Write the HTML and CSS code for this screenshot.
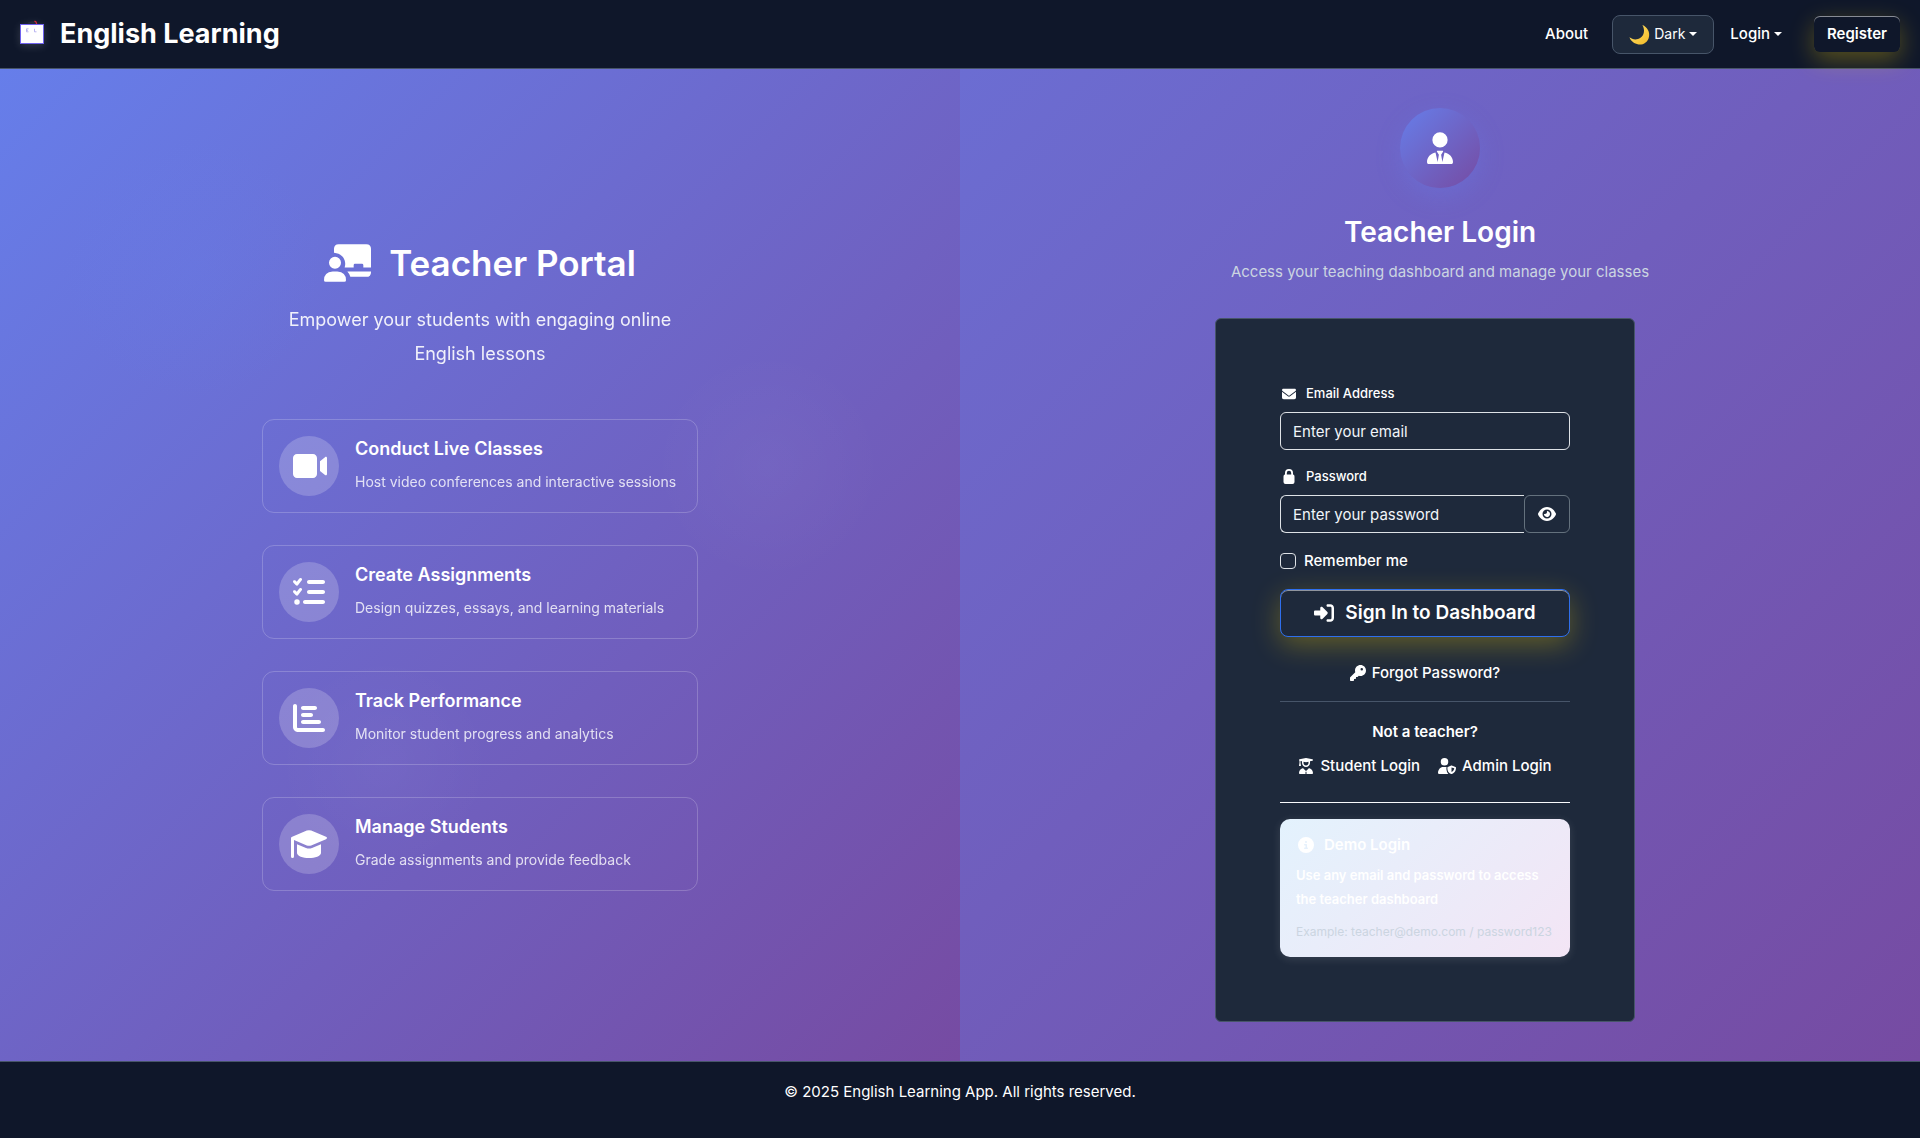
FILE: index.html
```html
<!DOCTYPE html>
<html lang="en">
<head>
<meta charset="utf-8">
<title>Teacher Login - English Learning</title>
<link rel="stylesheet" href="styles.css">
</head>
<body>
<header class="navbar">
  <a class="brand" href="#">
    <svg class="brand-logo" viewBox="0 0 40 32" aria-hidden="true">
      <path d="M16 4.500q4-2 8-1v2h-8z" fill="#252b3c"/>
      <path d="M22.500 3l1.500 1 .8 2.500" fill="none" stroke="#d92b3a" stroke-width="1.200"/>
      <rect x="8.500" y="6.500" width="23" height="19" fill="#fff" stroke="#6f62ee" stroke-width="1"/>
      <path d="M16.500 10.800h-2v3h2m-2-1.500h1.500M22.500 10.800v3h2" stroke="#a9a3ee" stroke-width=".8" fill="none"/>
    </svg>
    <span>English Learning</span>
  </a>
  <nav class="nav-links">
    <a class="nav-link" href="#">About</a>
    <button class="theme-toggle" type="button">
      <svg class="moon" viewBox="0 0 22 22" aria-hidden="true">
        <defs><linearGradient id="moonFill" x1="0" y1="0" x2="1" y2="1"><stop offset="0" stop-color="#ffe36b"/><stop offset="1" stop-color="#f3b928"/></linearGradient></defs>
        <path d="M14 1c5 2 8 7 7 12-1 6-6 9-11 8.500C5.500 21 2 18 .5 14c3 2.500 8 3 11.500.5C16 12 17 6 14 1z" fill="url(#moonFill)"/>
      </svg>
      <span>Dark</span><span class="caret"></span>
    </button>
    <a class="nav-link" href="#">Login<span class="caret"></span></a>
    <a class="register" href="#">Register</a>
  </nav>
</header>

<main class="split">
  <section class="promo">
    <div class="promo-content">
      <h1 class="promo-title">
        <svg class="promo-icon" viewBox="0 0 141 113" aria-hidden="true"><path d="M30 26V14Q30 0 44 0H127Q141 0 141 14V70H118V63Q118 59 114 59H93Q89 59 89 63V70H62C68 50 58 29 30 26zM70 82H141V84Q141 98 127 98H79Q76 88 70 82zM33 38a18 18 0 1 1 0 36 18 18 0 1 1 0-36zM26 82H40Q66 84 66 108 66 113 61 113H5Q0 113 0 108 0 84 26 82z"/></svg>
        <span>Teacher Portal</span>
      </h1>
      <p class="promo-lead">Empower your students with engaging online English lessons</p>
      <ul class="features">
        <li class="feature">
          <span class="feature-icon"><svg viewBox="0 0 576 512" width="36" height="32" aria-hidden="true"><path d="M32 128C32 92.700 60.700 64 96 64H352c35.300 0 64 28.700 64 64V384c0 35.300-28.700 64-64 64H96c-35.300 0-64-28.700-64-64V128zM464 178L544 114c14-10 32-4 32 16V382c0 20-18 26-32 16L464 334z"/></svg></span>
          <div><h2>Conduct Live Classes</h2><p>Host video conferences and interactive sessions</p></div>
        </li>
        <li class="feature">
          <span class="feature-icon"><svg viewBox="0 0 512 512" width="32" height="32" aria-hidden="true"><path d="M134 36c12 8 14 22 6 33l-58 76c-5 6-11 9-18 9s-13-3-17-8L7 106C-2 96-2 82 7 73s24-9 33 0l20 20 41-52c8-11 22-13 33-5zm0 160c12 8 14 22 6 33l-58 76c-5 6-11 9-18 9s-13-3-17-8L7 266c-9-10-9-24 0-33s24-9 33 0l20 20 41-52c8-11 22-13 33-5zM224 96c0-17.700 14.300-32 32-32H480c17.700 0 32 14.300 32 32s-14.300 32-32 32H256c-17.700 0-32-14.300-32-32zm0 160c0-17.700 14.300-32 32-32H480c17.700 0 32 14.300 32 32s-14.300 32-32 32H256c-17.700 0-32-14.300-32-32zM160 416c0-17.700 14.300-32 32-32H480c17.700 0 32 14.300 32 32s-14.300 32-32 32H192c-17.700 0-32-14.300-32-32zM64 372a44 44 0 1 1 0 88 44 44 0 1 1 0-88z"/></svg></span>
          <div><h2>Create Assignments</h2><p>Design quizzes, essays, and learning materials</p></div>
        </li>
        <li class="feature">
          <span class="feature-icon"><svg viewBox="0 0 512 512" width="32" height="32" aria-hidden="true"><path d="M32 32c17.700 0 32 14.300 32 32V400c0 8.800 7.200 16 16 16H480c17.700 0 32 14.300 32 32s-14.300 32-32 32H80c-44.200 0-80-35.800-80-80V64C0 46.300 14.300 32 32 32zm96 64c0-17.700 14.300-32 32-32H352c17.700 0 32 14.300 32 32s-14.300 32-32 32H160c-17.700 0-32-14.300-32-32zm32 80H288c17.700 0 32 14.300 32 32s-14.300 32-32 32H160c-17.700 0-32-14.300-32-32s14.300-32 32-32zm0 112H416c17.700 0 32 14.300 32 32s-14.300 32-32 32H160c-17.700 0-32-14.300-32-32s14.300-32 32-32z"/></svg></span>
          <div><h2>Track Performance</h2><p>Monitor student progress and analytics</p></div>
        </li>
        <li class="feature">
          <span class="feature-icon"><svg viewBox="0 0 36 28" width="36" height="28" aria-hidden="true"><path d="M15.800.6Q18-.3 20.200.6L35 6.800Q37 8 35 9.200L20.200 15.400Q18 16.300 15.800 15.400L3 10.100V26.500a1.500 1.500 0 0 1-3 0V8Q0 7 1.200 6.700zM6 14.200L15 17.900Q18 19 21 17.900L30 14.200V23C30 26 24 28 18 28S6 26 6 23z"/></svg></span>
          <div><h2>Manage Students</h2><p>Grade assignments and provide feedback</p></div>
        </li>
      </ul>
    </div>
  </section>

  <section class="login">
    <div class="login-head">
      <span class="avatar"><svg viewBox="0 0 448 512" width="28" height="32" aria-hidden="true"><path d="M224 248A122 122 0 1 1 224 4a122 122 0 1 1 0 244zM206 362l-30-48c-5-8 0-14 8-14h80c8 0 13 6 8 14l-30 48 20 116 34-152c80 14 136 76 136 152 0 20-10 34-28 34H44c-18 0-28-14-28-34 0-76 56-138 136-152l34 152z"/></svg></span>
      <h2>Teacher Login</h2>
      <p>Access your teaching dashboard and manage your classes</p>
    </div>
    <div class="card">
      <form class="form">
        <div class="field">
          <label for="email"><svg viewBox="0 0 512 512" width="14" height="14" aria-hidden="true"><path d="M48 64C21.500 64 0 85.500 0 112c0 15.100 7.100 29.300 19.200 38.400L236.800 313.600c11.400 8.500 27 8.500 38.400 0L492.800 150.400c12.100-9.100 19.200-23.300 19.200-38.400 0-26.500-21.500-48-48-48H48zM0 176V384c0 35.300 28.700 64 64 64H448c35.300 0 64-28.700 64-64V176L294.400 339.200c-22.800 17.100-54 17.100-76.800 0L0 176z"/></svg>Email Address</label>
          <input class="control" id="email" type="email" placeholder="Enter your email">
        </div>
        <div class="field">
          <label for="password"><svg viewBox="0 0 11 15" width="14" height="15" aria-hidden="true"><path fill-rule="evenodd" d="M1.500 5.500V4a4 4 0 0 1 8 0v1.500Q11 5.700 11 7.500V13q0 2-2 2H2q-2 0-2-2V7.500Q0 5.700 1.500 5.500zM3.300 5.500h4.400V4a2.200 2.200 0 0 0-4.400 0z"/></svg>Password</label>
          <div class="input-group">
            <input class="control" id="password" type="password" placeholder="Enter your password">
            <button class="reveal" type="button" aria-label="Show password"><svg viewBox="0 0 576 512" width="18" height="16" aria-hidden="true"><path d="M288 32c-80.800 0-145.500 36.800-192.600 80.600C48.600 156 17.300 208 2.500 243.700c-3.300 7.900-3.300 16.700 0 24.600C17.300 304 48.600 356 95.400 399.400C142.500 443.200 207.200 480 288 480s145.500-36.800 192.600-80.600c46.800-43.500 78.100-95.400 93-131.100c3.300-7.900 3.300-16.700 0-24.600c-14.900-35.700-46.200-87.700-93-131.100C433.500 68.800 368.800 32 288 32zM144 256a144 144 0 1 1 288 0 144 144 0 1 1-288 0zm144-64c0 35.300-28.700 64-64 64c-7.100 0-13.900-1.200-20.300-3.300c-5.500-1.800-11.900 1.600-11.700 7.400c.3 6.900 1.300 13.800 3.200 20.700c13.700 51.200 66.400 81.600 117.600 67.900s81.600-66.400 67.900-117.600c-11.100-41.500-47.800-69.400-88.600-71.100c-5.800-.2-9.200 6.100-7.400 11.700c2.100 6.400 3.300 13.200 3.300 20.300z"/></svg></button>
          </div>
        </div>
        <label class="check"><input type="checkbox">Remember me</label>
        <button class="submit" type="submit"><svg viewBox="0 0 512 512" width="20" height="20" aria-hidden="true"><path d="M352 96h64c17.700 0 32 14.300 32 32V384c0 17.700-14.300 32-32 32H352c-17.700 0-32 14.300-32 32s14.300 32 32 32h64c53 0 96-43 96-96V128c0-53-43-96-96-96H352c-17.700 0-32 14.300-32 32s14.300 32 32 32zm-9.400 182.600c12.500-12.500 12.500-32.800 0-45.300l-128-128c-9.200-9.200-22.900-11.900-34.900-6.900S160 115.100 160 128v64H32c-17.700 0-32 14.300-32 32v64c0 17.700 14.300 32 32 32H160v64c0 12.900 7.800 24.600 19.800 29.600s25.700 2.200 34.900-6.900l128-128z"/></svg>Sign In to Dashboard</button>
      </form>
      <a class="forgot icon-link" href="#"><svg viewBox="0 0 512 512" width="16" height="16" aria-hidden="true"><path d="M336 352c97.200 0 176-78.800 176-176S433.200 0 336 0S160 78.800 160 176c0 18.700 2.900 36.800 8.300 53.700L7 391c-4.500 4.500-7 10.600-7 17v80c0 13.300 10.700 24 24 24h80c13.300 0 24-10.700 24-24V448h40c13.300 0 24-10.700 24-24V384h40c6.400 0 12.500-2.500 17-7l33.300-33.300c16.900 5.400 35 8.300 53.700 8.300zM376 96a40 40 0 1 1 0 80 40 40 0 1 1 0-80z"/></svg>Forgot Password?</a>
      <div class="others">
        <p>Not a teacher?</p>
        <div class="other-links">
          <a class="icon-link" href="#"><svg viewBox="0 0 448 512" width="16" height="16" aria-hidden="true"><path d="M219.300.5c3.100-.6 6.300-.6 9.400 0l200 40C439.900 42.700 448 52.600 448 64s-8.100 21.300-19.300 23.500L352 102.900V160c0 70.700-57.300 128-128 128S96 230.700 96 160V102.900L48 93.300v65.100l15.700 78.400c.9 4.700-.3 9.600-3.300 13.300S52.800 256 48 256H16c-4.800 0-9.300-2.100-12.400-5.900s-4.300-8.600-3.300-13.300L16 158.400V86.600C6.500 83.300 0 74.300 0 64 0 52.600 8.100 42.700 19.300 40.500l200-40zM111.900 327.700c10.500-3.400 21.800.4 29.400 8.500l71 75.500c6.300 6.700 17 6.700 23.300 0l71-75.500c7.600-8.100 18.900-11.900 29.400-8.500C401 348.600 448 409.400 448 481.300c0 17-13.800 30.700-30.700 30.700H240V440h-32v72H30.700C13.800 512 0 498.200 0 481.300c0-71.900 47-132.700 111.900-153.600zM144 150v10c0 44 36 80 80 80s80-36 80-80v-38l-80 16-80-16z" fill-rule="evenodd"/></svg>Student Login</a>
          <a class="icon-link" href="#"><svg viewBox="0 0 576 512" width="18" height="16" aria-hidden="true"><path fill-rule="evenodd" d="M208 0a120 120 0 1 1 0 240 120 120 0 1 1 0-240zM163 288h90c8 0 16 1 24 2-6 8-9 18-9 30 0 72 20 142 62 192H30c-17 0-30-14-30-30 0-108 70-194 163-194zM423 242c5-2 11-2 17 0l120 45c9 4 16 12 16 23 0 60-24 162-136 201-6 2-12 2-17 0-112-39-123-141-123-201 0-11 6-19 15-23zm9 59v150c64-30 85-78 88-120z"/></svg>Admin Login</a>
        </div>
      </div>
      <aside class="demo">
        <h3><svg viewBox="0 0 512 512" width="16" height="16" aria-hidden="true"><path d="M256 512A256 256 0 1 0 256 0a256 256 0 1 0 0 512zM216 336h24V272H216c-13.300 0-24-10.700-24-24s10.700-24 24-24h48c13.300 0 24 10.700 24 24v88h8c13.300 0 24 10.700 24 24s-10.700 24-24 24H216c-13.300 0-24-10.700-24-24s10.700-24 24-24zm40-208a32 32 0 1 1 0 64 32 32 0 1 1 0-64z"/></svg>Demo Login</h3>
        <p>Use any email and password to access the teacher dashboard</p>
        <small>Example: teacher@demo.com / password123</small>
      </aside>
    </div>
  </section>
</main>

<footer class="footer">© 2025 English Learning App. All rights reserved.</footer>
</body>
</html>
```
FILE: styles.css
```css
*, *::before, *::after { box-sizing: border-box; }

body {
  margin: 0;
  min-height: 100vh;
  display: flex;
  flex-direction: column;
  background: #0f172a;
  color: #fff;
  font-family: Inter, "Liberation Sans", sans-serif;
  font-size: 15px;
  line-height: 24px;
}

h1, h2, h3, p, ul { margin: 0; padding: 0; }
a { color: inherit; text-decoration: none; }
svg { fill: currentColor; flex: none; }
button, input { font: inherit; color: inherit; }

.navbar {
  position: relative;
  z-index: 1;
  display: flex;
  align-items: center;
  justify-content: space-between;
  height: 69px;
  padding: 0 20px 0 12px;
  background: #0f172a;
  border-bottom: 1px solid #475569;
}
.brand { display: flex; align-items: center; gap: 8px; font-size: 27px; font-weight: 700; line-height: 40px; }
.brand-logo { width: 40px; height: 32px; filter: drop-shadow(0 2px 4px rgba(255, 255, 255, .15)); }
.nav-links { display: flex; align-items: center; gap: 8px; }
.nav-link { padding: 8px; font-weight: 500; }
.caret {
  display: inline-block;
  margin-left: 4px;
  vertical-align: 3px;
  border: 4px solid transparent;
  border-top-color: currentColor;
  border-bottom: 0;
}
.theme-toggle {
  display: flex;
  align-items: center;
  gap: 4px;
  height: 39px;
  margin-left: 8px;
  padding: 0 16px;
  background: #1e293b;
  border: 1px solid #475569;
  border-radius: 8px;
  font-size: 14px;
}
.theme-toggle .caret { margin-left: 0; }
.moon { width: 21px; height: 21px; }
.register {
  margin-left: 16px;
  padding: 6px 13px;
  background: #0f172a;
  border-radius: 6px;
  font-weight: 600;
  box-shadow: inset 0 1px 0 rgba(255, 255, 255, .5), 0 8px 24px rgba(255, 215, 0, .3);
}

.split {
  flex: 1;
  display: grid;
  grid-template-columns: 1fr 1fr;
  background: linear-gradient(135deg, #667eea 0%, #764ba2 100%);
}

.promo {
  display: flex;
  align-items: center;
  justify-content: center;
  padding: 48px;
  background:
    radial-gradient(circle at 20% 20%, rgba(102, 126, 234, .2), transparent 12%),
    radial-gradient(circle at 80% 40%, rgba(255, 255, 255, .03), transparent 12%),
    radial-gradient(circle at 40% 70%, rgba(255, 255, 255, .03), transparent 12%),
    linear-gradient(135deg, #667eea 0%, #764ba2 100%);
}
.promo-content { width: 436px; text-align: center; }
.promo-title {
  display: flex;
  align-items: center;
  justify-content: center;
  gap: 18px;
  font-size: 35px;
  font-weight: 600;
  line-height: 48px;
}
.promo-icon { width: 47px; height: 38px; }
.promo-lead { margin: 16px 0 48px; padding: 0 16px; font-size: 18px; line-height: 34px; opacity: .9; }
.features { display: grid; gap: 32px; list-style: none; text-align: left; }
.feature {
  display: flex;
  gap: 16px;
  padding: 16px;
  height: 94px;
  border: 1px solid rgba(255, 255, 255, .2);
  border-radius: 12px;
}
.feature-icon {
  display: grid;
  place-items: center;
  width: 60px;
  height: 60px;
  border-radius: 50%;
  background: rgba(255, 255, 255, .2);
}
.feature h2 { margin-bottom: 8px; font-size: 18px; font-weight: 600; line-height: 26px; }
.feature p { font-size: 14px; line-height: 24px; opacity: .8; }

.login { display: flex; flex-direction: column; align-items: center; padding: 39px 48px; }
.login-head { display: flex; flex-direction: column; align-items: center; margin-bottom: 34px; }
.avatar {
  display: grid;
  place-items: center;
  width: 80px;
  height: 80px;
  margin-bottom: 24px;
  border-radius: 50%;
  background: linear-gradient(135deg, #667eea 0%, #764ba2 100%);
  box-shadow: 0 8px 24px rgba(102, 126, 234, .3);
}
.login-head h2 { margin-bottom: 8px; font-size: 28px; font-weight: 600; line-height: 40px; }
.login-head p { color: #cbd5e1; }

.card {
  width: 420px;
  margin-right: 30px;
  padding: 64px;
  background: #1e293b;
  border: 1px solid #475569;
  border-radius: 6px;
}
.form { display: grid; gap: 16px; }
.field label { display: flex; align-items: center; gap: 10px; margin-bottom: 8px; padding-left: 2px; font-size: 13px; font-weight: 500; line-height: 21px; }
.control {
  display: block;
  width: 100%;
  min-width: 0;
  height: 38px;
  padding: 6px 12px;
  background: transparent;
  border: 1px solid #dee2e6;
  border-radius: 6px;
}
.control::placeholder { color: #f1f5f9; opacity: 1; }
.input-group { display: flex; }
.input-group .control { border-right: 0; border-radius: 6px 0 0 6px; }
.reveal {
  display: grid;
  place-items: center;
  flex: none;
  width: 46px;
  height: 38px;
  padding: 0;
  background: transparent;
  border: 1px solid #64717d;
  border-radius: 6px;
}
.check { display: flex; align-items: center; gap: 8px; font-weight: 500; }
.check input {
  appearance: none;
  width: 16px;
  height: 16px;
  margin: 0;
  border: 1px solid #dee2e6;
  border-radius: 4px;
}
.submit {
  display: flex;
  align-items: center;
  justify-content: center;
  gap: 11px;
  height: 48px;
  background: #1e293b;
  border: 1px solid #2f6fed;
  border-radius: 8px;
  font-size: 19px;
  font-weight: 600;
  box-shadow: inset 0 1px 0 rgba(255, 255, 255, .5), 0 8px 28px rgba(255, 215, 0, .3);
}
.icon-link { display: flex; align-items: center; justify-content: center; gap: 6px; font-weight: 500; }
.forgot { margin: 24px 0 16px; }
.others { padding: 18px 0 24px; border-top: 1px solid #475569; border-bottom: 1px solid #f8fafc; text-align: center; }
.others p { margin-bottom: 10px; font-weight: 600; }
.other-links { display: flex; justify-content: center; gap: 18px; }
.demo {
  margin-top: 16px;
  padding: 16px;
  background: linear-gradient(135deg, #e3f2fd 0%, #f3e5f5 100%);
  border-radius: 10px;
  box-shadow: 0 2px 10px rgba(255, 255, 255, .12);
}
.demo h3 { display: flex; align-items: center; gap: 10px; padding-left: 2px; margin-bottom: 8px; font-size: 15px; font-weight: 600; line-height: 20px; }
.demo p { margin-bottom: 12px; font-size: 13px; font-weight: 600; line-height: 24px; }
.demo small { display: block; font-size: 12px; line-height: 18px; color: #cbd5e1; }

.footer { height: 77px; padding-top: 18px; border-top: 1px solid #475569; text-align: center; }
```
